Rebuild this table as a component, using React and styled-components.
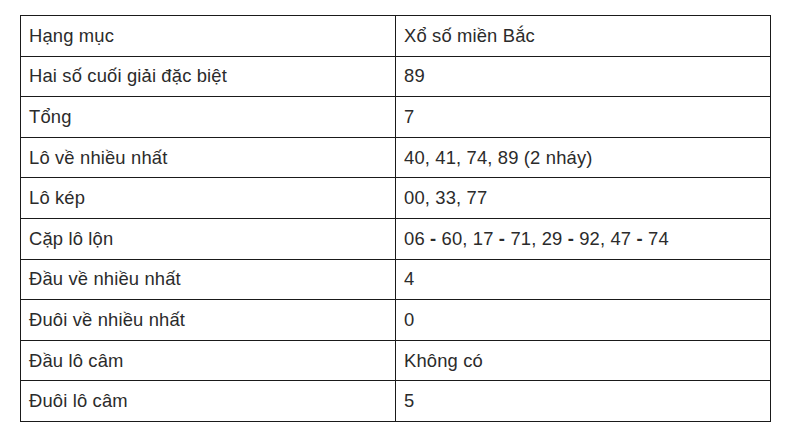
import styled, { createGlobalStyle } from "styled-components";

const GlobalStyle = createGlobalStyle`
  body {
    margin: 0;
    background: #fff;
    font-family: "Liberation Sans", Arial, sans-serif;
  }
`;

const rows = [
  ["Hạng mục", "Xổ số miền Bắc"],
  ["Hai số cuối giải đặc biệt", "89"],
  ["Tổng", "7"],
  ["Lô về nhiều nhất", "40, 41, 74, 89 (2 nháy)"],
  ["Lô kép", "00, 33, 77"],
  ["Cặp lô lộn", "06 - 60, 17 - 71, 29 - 92, 47 - 74"],
  ["Đầu về nhiều nhất", "4"],
  ["Đuôi về nhiều nhất", "0"],
  ["Đầu lô câm", "Không có"],
  ["Đuôi lô câm", "5"],
];

const Page = styled.div`
  padding: 15px 20px;
`;

const Table = styled.table`
  width: 751px;
  border-collapse: collapse;
  table-layout: fixed;
  color: #2b2b2b;
  font-size: 18.4px;
  letter-spacing: 0.15px;
`;

const Row = styled.tr`
  height: 40.6px;
`;

const Cell = styled.td`
  border: 1px solid #1a1a1a;
  padding: 0 8px;
  vertical-align: middle;
  line-height: 1.2;
`;

const Dash = styled.span`
  font-weight: 700;
`;

// hyphens in the pair list render heavier than the digits
const renderValue = (value) =>
  value.split(" - ").flatMap((part, i) =>
    i === 0 ? [part] : [<Dash key={i}> - </Dash>, part]
  );

export default function App() {
  return (
    <Page>
      <GlobalStyle />
      <Table>
        <tbody>
          {rows.map(([label, value]) => (
            <Row key={label}>
              <Cell>{label}</Cell>
              <Cell>{renderValue(value)}</Cell>
            </Row>
          ))}
        </tbody>
      </Table>
    </Page>
  );
}
